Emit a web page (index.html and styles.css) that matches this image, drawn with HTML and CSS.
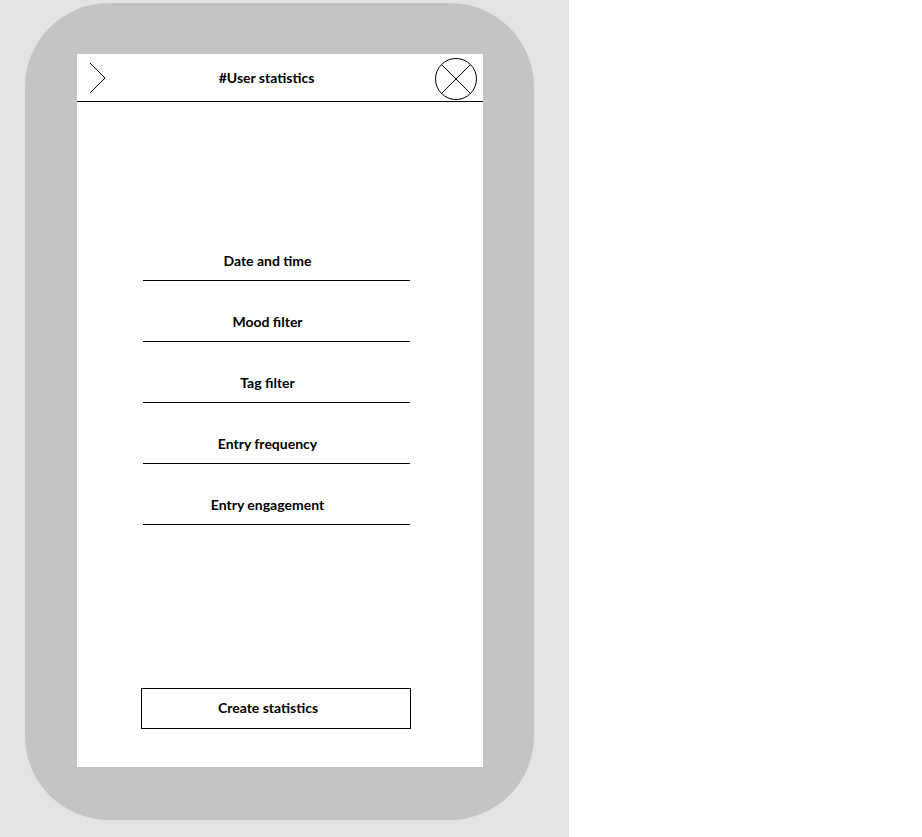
FILE: index.html
```html
<!DOCTYPE html>
<html lang="en">
<head>
    <meta charset="UTF-8">
    <meta name="viewport" content="width=device-width, initial-scale=1.0">
    <title>User statistics</title>
    <link rel="stylesheet" href="styles.css">
</head>
<body>

<div class="stage">
    <div class="phone">
        <div class="screen">
            <div class="header">
                <svg class="back" width="18" height="32" viewBox="0 0 18 32">
                    <path d="M1 1 L16 16 L1 31" fill="none" stroke="#000" stroke-width="1"/>
                </svg>
                <h2 class="title">#User statistics</h2>
                <svg class="close" width="44" height="44" viewBox="0 0 44 44">
                    <circle cx="22" cy="22" r="20.5" fill="none" stroke="#000" stroke-width="1"/>
                    <path d="M7.5 7.5 L36.5 36.5 M36.5 7.5 L7.5 36.5" stroke="#000" stroke-width="1"/>
                </svg>
            </div>

            <div class="fields">
                <div class="field">Date and time</div>
                <div class="field">Mood filter</div>
                <div class="field">Tag filter</div>
                <div class="field">Entry frequency</div>
                <div class="field">Entry engagement</div>
            </div>

            <button class="create" type="button">Create statistics</button>
        </div>
    </div>
</div>

</body>
</html>
```

FILE: styles.css
```css
body {
    margin: 0;
    background-color: #fff;
    font-family: Lato, "Open Sans", Arial, sans-serif;
}

.stage {
    width: 569px;
    height: 837px;
    background-color: #e3e3e3;
    padding-top: 3px;
    box-sizing: border-box;
}

.phone {
    width: 509px;
    height: 817px;
    margin-left: 25px;
    background-color: #c4c4c4;
    border-radius: 84px;
    padding: 51px 51px 53px 52px;
    box-sizing: border-box;
}

.screen {
    background-color: #fff;
    height: 100%;
    display: flex;
    flex-direction: column;
}

.header {
    height: 47px;
    border-bottom: 1px solid #000;
    display: flex;
    align-items: center;
    padding: 0 5px 0 12px;
}

.back {
    display: block;
}

.title {
    flex: 1;
    margin: 0;
    text-align: center;
    font-size: 14px;
    font-weight: bold;
    color: #000;
    padding-right: 8px;
}

.close {
    display: block;
    margin-top: 2px;
}

.fields {
    display: flex;
    flex-direction: column;
    gap: 32px;
    margin: 150px 0 0 66px;
    width: 267px;
}

.field {
    font-size: 14px;
    font-weight: bold;
    line-height: 17px;
    text-align: center;
    padding: 0 18px 11px 0;
    border-bottom: 1px solid #000;
}

.create {
    margin: auto 0 38px 64px;
    width: 270px;
    height: 41px;
    background-color: #fff;
    border: 1px solid #000;
    font-family: inherit;
    font-size: 14px;
    font-weight: bold;
    color: #000;
    padding: 0 16px 2px 0;
}
```
